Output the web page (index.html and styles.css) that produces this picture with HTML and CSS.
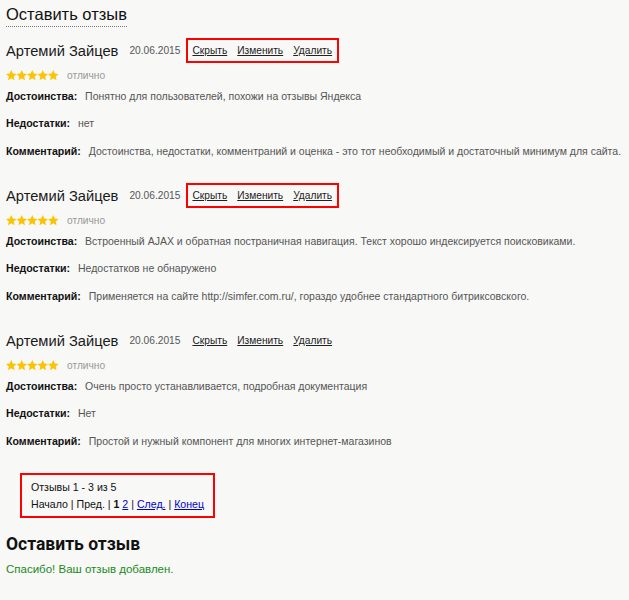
FILE: index.html
```html
<!DOCTYPE html>
<html lang="ru">
<head>
<meta charset="utf-8">
<title>Отзывы</title>
<link rel="stylesheet" href="styles.css">
</head>
<body>
<div class="page">
  <h2 class="title"><span>Оставить отзыв</span></h2>

  <div class="review">
    <div class="head">
      <span class="name">Артемий Зайцев</span>
      <span class="date">20.06.2015</span>
      <span class="actions boxed"><a href="#">Скрыть</a><a href="#">Изменить</a><a href="#">Удалить</a></span>
    </div>
    <div class="rating">
      <svg class="stars" width="53" height="11" viewBox="0 0 53 11"><defs><polygon id="s" points="5.25,0 6.8,3.5 10.5,3.9 7.7,6.4 8.5,10.2 5.25,8.2 2,10.2 2.8,6.4 0,3.9 3.7,3.5" fill="#fbc300"/></defs><use href="#s" x="0"/><use href="#s" x="10.5"/><use href="#s" x="21"/><use href="#s" x="31.5"/><use href="#s" x="42"/></svg>
      <span class="mark">отлично</span>
    </div>
    <div class="field f1"><b>Достоинства:</b> Понятно для пользователей, похожи на отзывы Яндекса</div>
    <div class="field f2"><b>Недостатки:</b> нет</div>
    <div class="field f3"><b>Комментарий:</b> Достоинства, недостатки, комментраний и оценка - это тот необходимый и достаточный минимум для сайта.</div>
  </div>

  <div class="review">
    <div class="head">
      <span class="name">Артемий Зайцев</span>
      <span class="date">20.06.2015</span>
      <span class="actions boxed"><a href="#">Скрыть</a><a href="#">Изменить</a><a href="#">Удалить</a></span>
    </div>
    <div class="rating">
      <svg class="stars" width="53" height="11" viewBox="0 0 53 11"><use href="#s" x="0"/><use href="#s" x="10.5"/><use href="#s" x="21"/><use href="#s" x="31.5"/><use href="#s" x="42"/></svg>
      <span class="mark">отлично</span>
    </div>
    <div class="field f1"><b>Достоинства:</b> Встроенный AJAX и обратная постраничная навигация. Текст хорошо индексируется поисковиками.</div>
    <div class="field f2"><b>Недостатки:</b> Недостатков не обнаружено</div>
    <div class="field f3"><b>Комментарий:</b> Применяется на сайте http://simfer.com.ru/, гораздо удобнее стандартного битриксовского.</div>
  </div>

  <div class="review">
    <div class="head">
      <span class="name">Артемий Зайцев</span>
      <span class="date">20.06.2015</span>
      <span class="actions"><a href="#">Скрыть</a><a href="#">Изменить</a><a href="#">Удалить</a></span>
    </div>
    <div class="rating">
      <svg class="stars" width="53" height="11" viewBox="0 0 53 11"><use href="#s" x="0"/><use href="#s" x="10.5"/><use href="#s" x="21"/><use href="#s" x="31.5"/><use href="#s" x="42"/></svg>
      <span class="mark">отлично</span>
    </div>
    <div class="field f1"><b>Достоинства:</b> Очень просто устанавливается, подробная документация</div>
    <div class="field f2"><b>Недостатки:</b> Нет</div>
    <div class="field f3"><b>Комментарий:</b> Простой и нужный компонент для многих интернет-магазинов</div>
  </div>

  <div class="pager">
    <div>Отзывы 1 - 3 из 5</div>
    <div>Начало | Пред. | <b>1</b> <a href="#">2</a> | <a href="#">След.</a> | <a href="#">Конец</a></div>
  </div>

  <h2 class="form-title">Оставить отзыв</h2>
  <div class="thanks">Спасибо! Ваш отзыв добавлен.</div>
</div>
</body>
</html>
```
FILE: styles.css
```css
html, body {
  margin: 0;
  padding: 0;
  background: #f8f8f7;
}
body {
  font-family: "Liberation Sans", Arial, sans-serif;
  color: #222;
}
.page {
  padding: 0 0 0 6px;
}
.title {
  margin: 0;
  padding-top: 4px;
  font-size: 16.5px;
  font-weight: normal;
  line-height: 21px;
  color: #111;
}
.title span {
  display: inline-block;
  border-bottom: 1px dotted #777;
  padding-bottom: 1px;
}
.review {
  margin-top: 11px;
  margin-bottom: 24px;
}
.review + .review {
  margin-top: 0;
}
.head {
  display: flex;
  align-items: center;
  height: 25px;
}
.name {
  font-size: 14.7px;
  color: #1a1a1a;
}
.date {
  font-size: 10.2px;
  color: #555;
  margin-left: 11px;
}
.actions {
  display: flex;
  align-items: center;
  gap: 10px;
  margin-left: 6px;
  height: 21px;
  padding: 0 5px 0 4px;
  border: 2px solid transparent;
  font-size: 10.2px;
}
.actions.boxed {
  border-color: #f00;
}
.actions a {
  color: #222;
  text-decoration: underline;
}
.rating {
  display: flex;
  align-items: center;
  gap: 8px;
  height: 12px;
  margin-top: 6px;
}
.stars {
  display: block;
}
.mark {
  font-size: 10.2px;
  color: #999;
}
.field {
  font-size: 10.5px;
  line-height: 16px;
  color: #555;
  white-space: nowrap;
}
.field b {
  font-size: 10.6px;
  color: #111;
  margin-right: 5px;
}
.f1 { margin-top: 7px; }
.f2 { margin-top: 11px; }
.f3 { margin-top: 12px; }
.pager {
  display: inline-block;
  margin-left: 14px;
  border: 2px solid #f00;
  padding: 4px 9px 3px 9px;
  font-size: 10.6px;
  line-height: 17px;
  color: #111;
}
.pager a {
  color: #00c;
}
.form-title {
  margin: 14px 0 0;
  font-family: Roboto, "Liberation Sans", sans-serif;
  font-size: 17.5px;
  line-height: 24px;
  font-weight: bold;
  color: #111;
}
.thanks {
  margin-top: 7px;
  font-size: 11.5px;
  color: #1a8a1a;
}
```
